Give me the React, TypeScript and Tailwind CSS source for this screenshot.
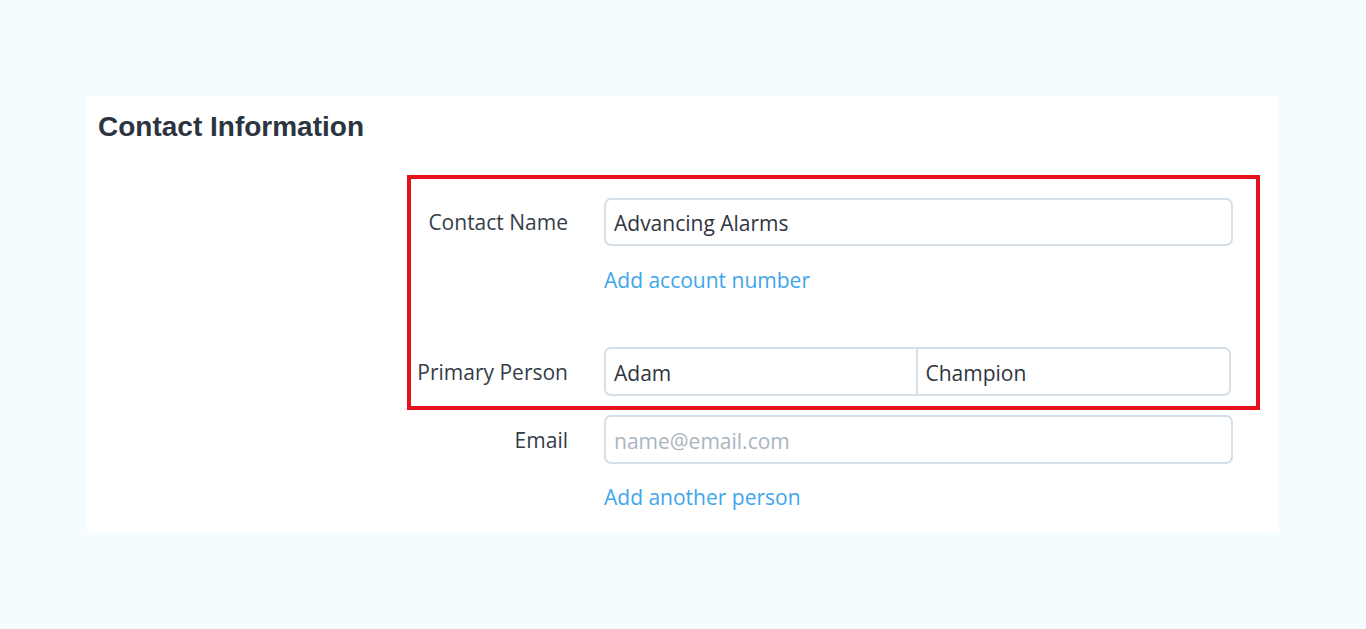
const labelCls = "w-[157px] shrink-0 text-right text-[21px] leading-7 text-[#343d48]"
const inputCls =
    "h-[48px] rounded-[7px] border-2 border-[#d5dfe7] bg-white px-[8px] pt-[2px] text-[21px] text-[#2f3640] outline-none placeholder:text-[#a9b5c1]"
const linkCls = "text-[21px] leading-7 text-[#3ea6ec]"

function Row(props: { label: string; children: React.ReactNode }) {
    return (
        <div className="flex items-center gap-[36px]">
            <label className={labelCls}>{props.label}</label>
            {props.children}
        </div>
    )
}

export default function App() {
    return (
        <div
            className="min-h-[629px] w-full bg-[#f4fcff] pt-[96px]"
            style={{ fontFamily: '"Open Sans", "Noto Sans", sans-serif' }}
        >
            <div className="ml-[87px] h-[437px] w-[1192px] bg-white">
                <h1
                    className="pl-[11px] pt-[15px] text-[28px] font-bold leading-8 text-[#2b3440]"
                    style={{ fontFamily: '"Liberation Sans", Arial, sans-serif' }}
                >
                    Contact Information
                </h1>

                <div className="ml-[320px] mt-[32px] w-[853px]">
                    {/* highlighted block */}
                    <div className="border-4 border-[#e5121c] pb-[10px] pr-[23px] pt-[19px]">
                        <Row label="Contact Name">
                            <input className={inputCls + " flex-1"} defaultValue="Advancing Alarms" />
                        </Row>
                        <div className="ml-[193px] mt-[20px]">
                            <a href="#" className={linkCls}>Add account number</a>
                        </div>
                        <div className="mt-[53px]">
                            <Row label="Primary Person">
                                <div className="flex flex-1 pr-[2px]">
                                    <input className={inputCls + " h-[49px] w-1/2 rounded-r-none"} defaultValue="Adam" />
                                    <input className={inputCls + " h-[49px] w-1/2 rounded-l-none border-l-0"} defaultValue="Champion" />
                                </div>
                            </Row>
                        </div>
                    </div>

                    <div className="mt-[5px] pl-[4px] pr-[27px]">
                        <Row label="Email">
                            <input className={inputCls + " h-[49px] flex-1"} placeholder="name@email.com" />
                        </Row>
                        <div className="ml-[193px] mt-[19px]">
                            <a href="#" className={linkCls}>Add another person</a>
                        </div>
                    </div>
                </div>
            </div>
        </div>
    )
}
